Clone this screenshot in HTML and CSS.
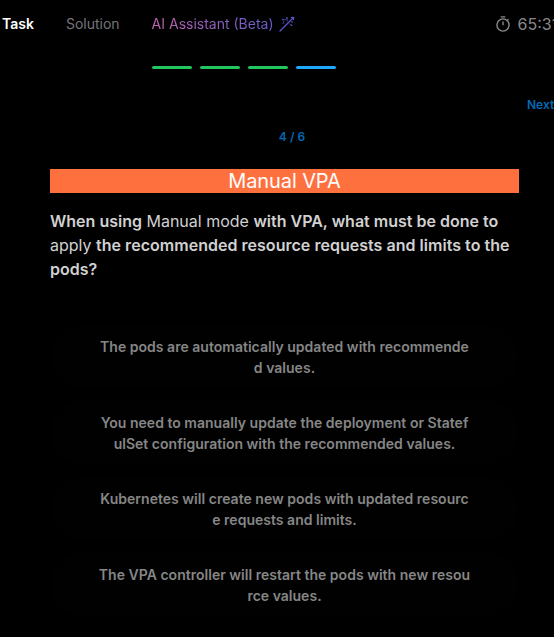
FILE: index.html
```html
<!DOCTYPE html>
<html lang="en">
<head>
<meta charset="utf-8">
<title>Manual VPA</title>
<link rel="stylesheet" href="styles.css">
</head>
<body>
<header class="topbar">
  <nav class="tabs">
    <a class="tab tab-active">Task</a>
    <a class="tab">Solution</a>
    <a class="tab tab-ai"><span class="ai-label">AI Assistant (Beta)</span>
      <svg class="wand" viewBox="0 0 16 16" fill="none" stroke="#5b55cf" stroke-linecap="round" stroke-linejoin="round">
        <path d="M1 15 10.5 5.5" stroke-width="1.3"/>
        <path d="M10.5 5.5 14 2M12.3 1.5l2.4-.3-.3 2.4" stroke-width="1.1"/>
        <path d="M3.5 3.2 6 4l2-1.7.2 2.8M3.3 3.5l1.5 2.2-.8 2M10.8 8l1.6 1.2" stroke-width="1" opacity=".7"/>
        <path d="M12.6 9.2v.2M8 1.8v.1M13 5.8v.1" stroke-width="1.5"/>
      </svg>
    </a>
  </nav>
  <div class="timer">
    <svg class="clock" viewBox="0 0 16 16" fill="none" stroke="currentColor" stroke-width="1.4">
      <circle cx="8" cy="9" r="6.1"/>
      <path d="M5.7.9h4.6M8 5.4V9.3M12.3 4.5l1.2-1.2"/>
    </svg>
    <span>65:31</span>
  </div>
</header>
<div class="progress">
  <span class="step"></span><span class="step"></span><span class="step"></span><span class="step step-current"></span>
</div>
<div class="next-row"><a class="next">Next</a></div>
<main class="quiz">
  <div class="counter">4 / 6</div>
  <h1 class="title">Manual VPA</h1>
  <p class="question"><b>When using</b> Manual mode <b>with VPA, what must be done to</b> apply <b class="tail">the recommended resource requests and limits to the pods?</b></p>
  <div class="options">
    <button class="option">The pods are automatically updated with recommended values.</button>
    <button class="option">You need to manually update the deployment or StatefulSet configuration with the recommended values.</button>
    <button class="option">Kubernetes will create new pods with updated resource requests and limits.</button>
    <button class="option">The VPA controller will restart the pods with new resource values.</button>
  </div>
</main>
</body>
</html>
```

FILE: styles.css
```css
* { box-sizing: border-box; }
body {
  margin: 0;
  width: 554px;
  height: 637px;
  overflow: hidden;
  background: #000;
  font-family: Inter, "Liberation Sans", sans-serif;
}
.topbar {
  display: flex;
  height: 48px;
  align-items: center;
  padding-left: 2px;
}
.tabs { display: flex; gap: 32px; flex: none; }
.tab {
  display: flex;
  align-items: center;
  font-size: 14px;
  line-height: 20px;
  color: #74767a;
  white-space: nowrap;
}
.tab-active { color: #fff; font-weight: 600; }
.ai-label {
  background: linear-gradient(90deg, #c465b0, #635bcb);
  -webkit-background-clip: text;
  background-clip: text;
  color: transparent;
}
.wand { width: 16px; height: 16px; margin-left: 5px; }
.timer {
  display: flex;
  flex: none;
  align-items: center;
  gap: 7px;
  margin-left: 200px;
  color: #88898c;
  font-size: 16px;
  line-height: 24px;
}
.clock { width: 16px; height: 16px; }
.progress { display: flex; gap: 8px; padding: 18px 0 0 152px; }
.step { width: 40px; height: 3px; border-radius: 2px; background: #22c55e; }
.step-current { background: #1ea7fd; }
.next-row { display: flex; padding: 28px 0 0 527px; }
.next, .counter {
  color: #0369b4;
  font-size: 12px;
  font-weight: 600;
  line-height: 16px;
}
.quiz { width: 469px; margin-left: 50px; }
.counter { margin: 16px 0 24px 15px; text-align: center; }
.title {
  margin: 0;
  height: 24px;
  background: #ff703f;
  color: #fff;
  font-size: 20px;
  font-weight: 400;
  line-height: 24px;
  letter-spacing: -.1px;
  text-align: center;
}
.question {
  margin: 16px 0 0;
  font-size: 16px;
  line-height: 24px;
  color: #d1d1d1;
}
.question b { font-weight: 600; }
.question .tail { letter-spacing: .03px; }
.options { display: flex; flex-direction: column; gap: 12px; margin-top: 44px; }
.option {
  height: 64px;
  padding: 0 48px;
  border: 0;
  border-radius: 32px;
  background: #010101;
  color: #868686;
  font-family: inherit;
  font-size: 14px;
  font-weight: 600;
  line-height: 21px;
  letter-spacing: .02px;
  text-align: center;
  word-break: break-all;
}
```
